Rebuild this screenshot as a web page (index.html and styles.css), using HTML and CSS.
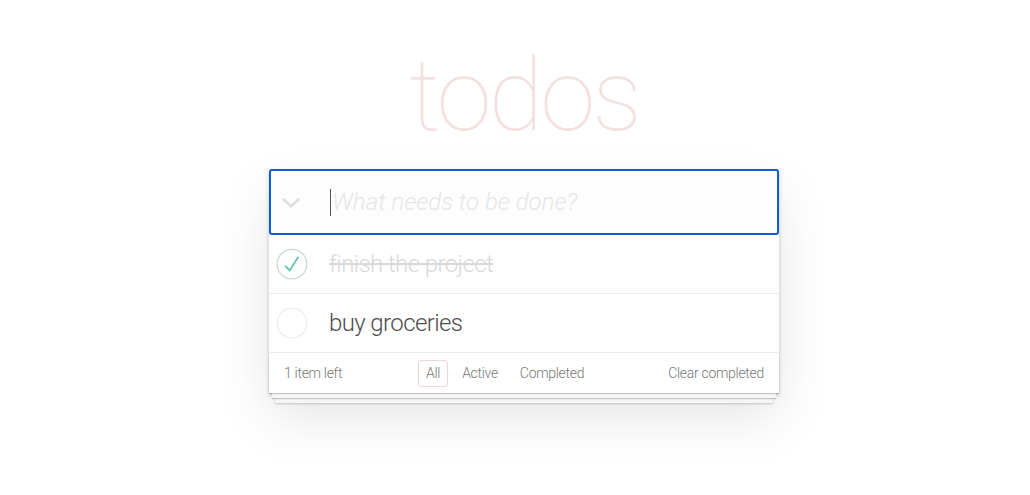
FILE: index.html
```html
<!DOCTYPE html>
<html lang="en">
<head>
<meta charset="utf-8">
<title>todos</title>
<link rel="stylesheet" href="styles.css">
</head>
<body>
<div class="page">
  <section class="todoapp">
    <h1 class="title">todos</h1>
    <div class="card">
      <div class="new-todo">
        <span class="toggle-all">
          <svg width="18" height="10" viewBox="0 0 18 10"><polyline points="1.5,1.5 9,8.3 16.5,1.5" fill="none" stroke="#dedede" stroke-width="2.6" stroke-linecap="round" stroke-linejoin="round"/></svg>
        </span>
        <span class="caret"></span>
        <span class="placeholder">What needs to be done?</span>
      </div>
      <ul class="todo-list">
        <li class="todo completed">
          <svg class="toggle" width="40" height="40" viewBox="-10 -18 100 135"><circle cx="50" cy="50" r="50" fill="none" stroke="#bddad5" stroke-width="4"/><path fill="none" stroke="#5dc2af" stroke-width="6" d="M72 25L42 71 27 56"/></svg>
          <label class="todo-label">finish the project</label>
        </li>
        <li class="todo">
          <svg class="toggle" width="40" height="40" viewBox="-10 -18 100 135"><circle cx="50" cy="50" r="50" fill="none" stroke="#ededed" stroke-width="4"/></svg>
          <label class="todo-label">buy groceries</label>
        </li>
      </ul>
      <footer class="footer">
        <span class="todo-count">1 item left</span>
        <ul class="filters">
          <li><a class="filter selected">All</a></li>
          <li><a class="filter">Active</a></li>
          <li><a class="filter">Completed</a></li>
        </ul>
        <span class="clear-completed">Clear completed</span>
      </footer>
    </div>
  </section>
</div>
</body>
</html>
```
FILE: styles.css
```css
html, body {
  margin: 0;
  padding: 0;
}
body {
  background: #ffffff;
  font-family: Roboto, "Liberation Sans", sans-serif;
  font-weight: 300;
  color: #4d4d4d;
  -webkit-font-smoothing: antialiased;
  min-height: 495px;
}
ul {
  margin: 0;
  padding: 0;
  list-style: none;
}
.page {
  display: flex;
  justify-content: center;
  padding-left: 18px;
  padding-bottom: 80px;
}
.todoapp {
  width: 510px;
  margin-top: 46px;
  display: flex;
  flex-direction: column;
}
.title {
  margin: 0 0 23px;
  height: 100px;
  font-size: 100px;
  line-height: 100px;
  font-weight: 100;
  letter-spacing: -3px;
  text-align: center;
  color: rgba(175, 47, 47, 0.15);
}
.card {
  position: relative;
  background: #fff;
  box-shadow: 0 2px 4px rgba(0, 0, 0, 0.2), 0 25px 50px rgba(0, 0, 0, 0.1);
}
.new-todo {
  position: relative;
  z-index: 1;
  height: 66px;
  box-sizing: border-box;
  display: flex;
  align-items: center;
  background: #fdfdfd;
  outline: 2px solid #0b5fd7;
  outline-offset: -2px;
  border-radius: 3px;
  box-shadow: inset 0 -2px 1px rgba(0, 0, 0, 0.03);
}
.toggle-all {
  width: 31px;
  flex: none;
  display: flex;
  justify-content: flex-end;
  padding-top: 1px;
}
.caret {
  width: 1px;
  height: 27px;
  background: #555;
  margin-left: 30px;
}
.placeholder {
  font-size: 24px;
  font-style: italic;
  font-weight: 300;
  color: #e6e6e6;
  margin-left: 1px;
}
.todo {
  height: 59px;
  box-sizing: border-box;
  border-bottom: 1px solid #ededed;
  display: flex;
  align-items: center;
}
.toggle {
  flex: none;
}
.todo-label {
  margin-left: 20px;
  font-size: 24px;
  line-height: 1.2;
  letter-spacing: -0.6px;
  color: #4d4d4d;
}
.completed .todo-label {
  color: #d9d9d9;
  text-decoration: line-through;
}
.footer {
  position: relative;
  height: 40px;
  box-sizing: border-box;
  padding: 0 15px;
  display: grid;
  grid-template-columns: 134px auto 1fr;
  align-items: center;
  font-size: 14px;
  letter-spacing: -0.3px;
  color: #777;
  background: #fff;
  box-shadow: 0 1px 1px rgba(0, 0, 0, 0.2), 0 8px 0 -3px #f6f6f6, 0 9px 1px -3px rgba(0, 0, 0, 0.2), 0 16px 0 -6px #f6f6f6, 0 17px 2px -6px rgba(0, 0, 0, 0.2);
}
.filters {
  display: flex;
  gap: 6px;
}
.filter {
  display: block;
  padding: 3px 7px;
  border: 1px solid transparent;
  border-radius: 3px;
  line-height: 19px;
  color: #777;
}
.filter.selected {
  border-color: rgba(175, 47, 47, 0.2);
}
.clear-completed {
  justify-self: end;
}
```
